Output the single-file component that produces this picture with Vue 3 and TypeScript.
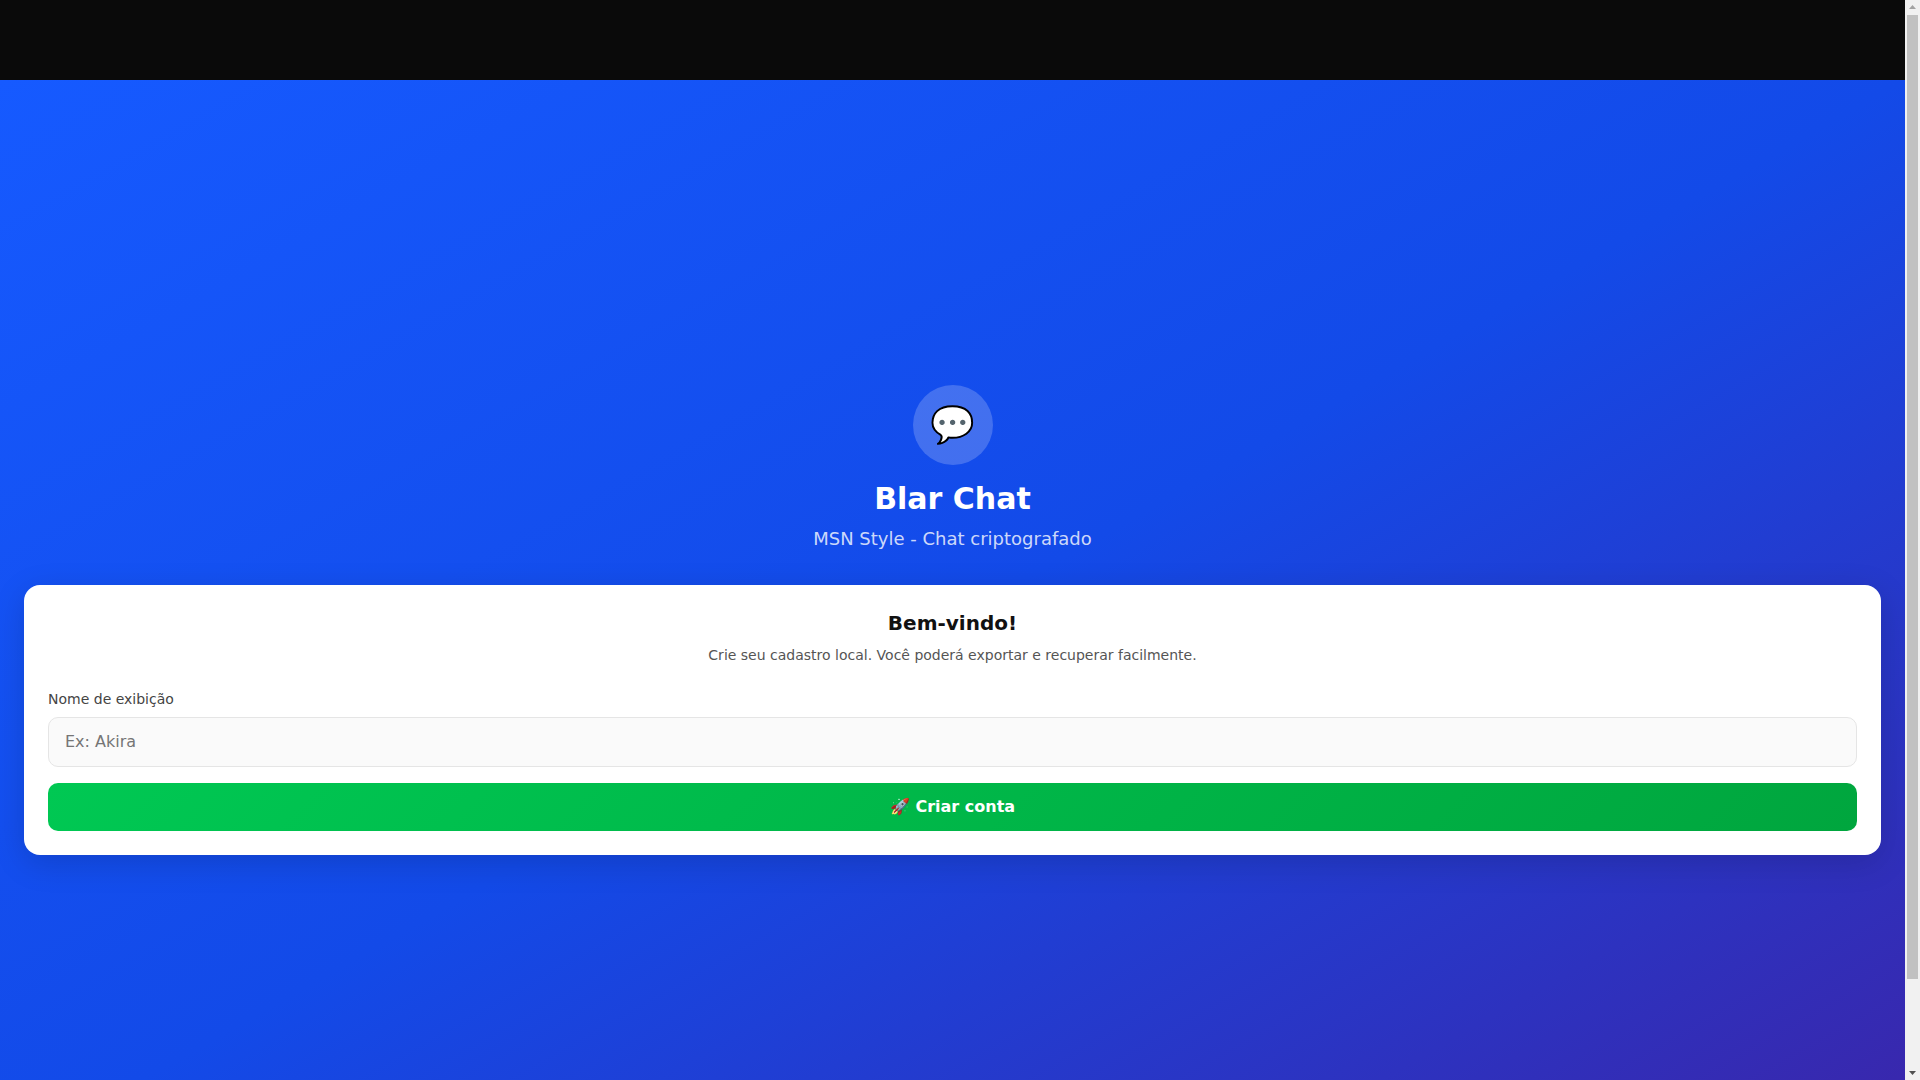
<script setup lang="ts">
import { ref } from "vue";
const nome = ref<string>("");
</script>

<template>
  <div class="shell">
    <div class="content">
      <header class="topbar"></header>
      <main class="main">
        <div class="brand">
          <div class="logo">💬</div>
          <h1 class="title">Blar Chat</h1>
          <p class="subtitle">MSN Style - Chat criptografado</p>
        </div>
        <section class="card">
          <h2 class="card-title">Bem-vindo!</h2>
          <p class="card-text">Crie seu cadastro local. Você poderá exportar e recuperar facilmente.</p>
          <label class="label" for="nome">Nome de exibição</label>
          <input id="nome" v-model="nome" class="input" type="text" placeholder="Ex: Akira" />
          <button class="btn" type="button">🚀 Criar conta</button>
        </section>
      </main>
    </div>
    <div class="rail" aria-hidden="true">
      <svg class="arrow" width="15" height="15" viewBox="0 0 15 15"><path d="M7.5 5 L11 9 L4 9 Z" fill="#a3a3a3" /></svg>
      <div class="track"><div class="thumb"></div></div>
      <svg class="arrow" width="15" height="15" viewBox="0 0 15 15"><path d="M4 6 L11 6 L7.5 10 Z" fill="#505050" /></svg>
    </div>
  </div>
</template>

<style>
html, body { margin: 0; padding: 0; overflow: hidden; }
</style>

<style scoped>
.shell {
  display: flex;
  height: 100vh;
  font-family: "DejaVu Sans", sans-serif;
  background: #fff;
}
.content {
  flex: 1;
  min-width: 0;
  overflow-y: auto;
  scrollbar-width: none;
  padding-bottom: 16px;
  box-sizing: border-box;
}
.topbar { height: 80px; background: #0a0a0a; }
.main {
  box-sizing: border-box;
  min-height: 1080px;
  padding: 24px;
  display: flex;
  flex-direction: column;
  justify-content: center;
  background: linear-gradient(to bottom right, #165aff 0%, #134ae8 50%, #3b25a9 100%);
}
.brand { display: flex; flex-direction: column; align-items: center; margin-bottom: 34px; }
.logo {
  width: 80px;
  height: 80px;
  border-radius: 50%;
  background: rgba(255, 255, 255, 0.2);
  display: flex;
  align-items: center;
  justify-content: center;
  font-size: 36px;
  margin-bottom: 16px;
}
.title { margin: 0 0 10px; font-size: 30px; line-height: 36px; font-weight: 700; color: #fff; }
.subtitle { margin: 0; font-size: 18px; line-height: 24px; color: rgba(255, 255, 255, 0.8); }
.card {
  background: #fff;
  border-radius: 16px;
  padding: 24px;
  box-shadow: 0 8px 32px rgba(0, 0, 0, 0.15);
  display: flex;
  flex-direction: column;
}
.card-title { margin: 0 0 7px; font-size: 20px; line-height: 29px; font-weight: 700; color: #111; text-align: center; }
.card-text { margin: 0 0 23px; font-size: 14px; line-height: 21px; color: #555; text-align: center; }
.label { font-size: 14px; line-height: 20px; font-weight: 500; color: #444; margin-bottom: 8px; }
.input {
  box-sizing: border-box;
  height: 50px;
  width: 100%;
  padding: 0 16px 1px;
  border: 1.5px solid #e5e5e5;
  border-radius: 10px;
  background: #fafafa;
  font: 16px "DejaVu Sans", sans-serif;
  color: #111;
  outline: none;
  margin-bottom: 16px;
}
.btn {
  height: 48px;
  width: 100%;
  padding: 0 0 1px;
  border: 0;
  border-radius: 10px;
  background: linear-gradient(135deg, #00c853, #00a63e);
  color: #fff;
  font: 700 16px "DejaVu Sans", sans-serif;
  cursor: pointer;
}
.rail {
  flex: none;
  width: 15px;
  display: flex;
  flex-direction: column;
  background: #f1f1f1;
}
.arrow { display: block; flex: none; }
.track { flex: 1; padding: 0 2px; }
.thumb { height: 964px; background: #c1c1c1; }
</style>
